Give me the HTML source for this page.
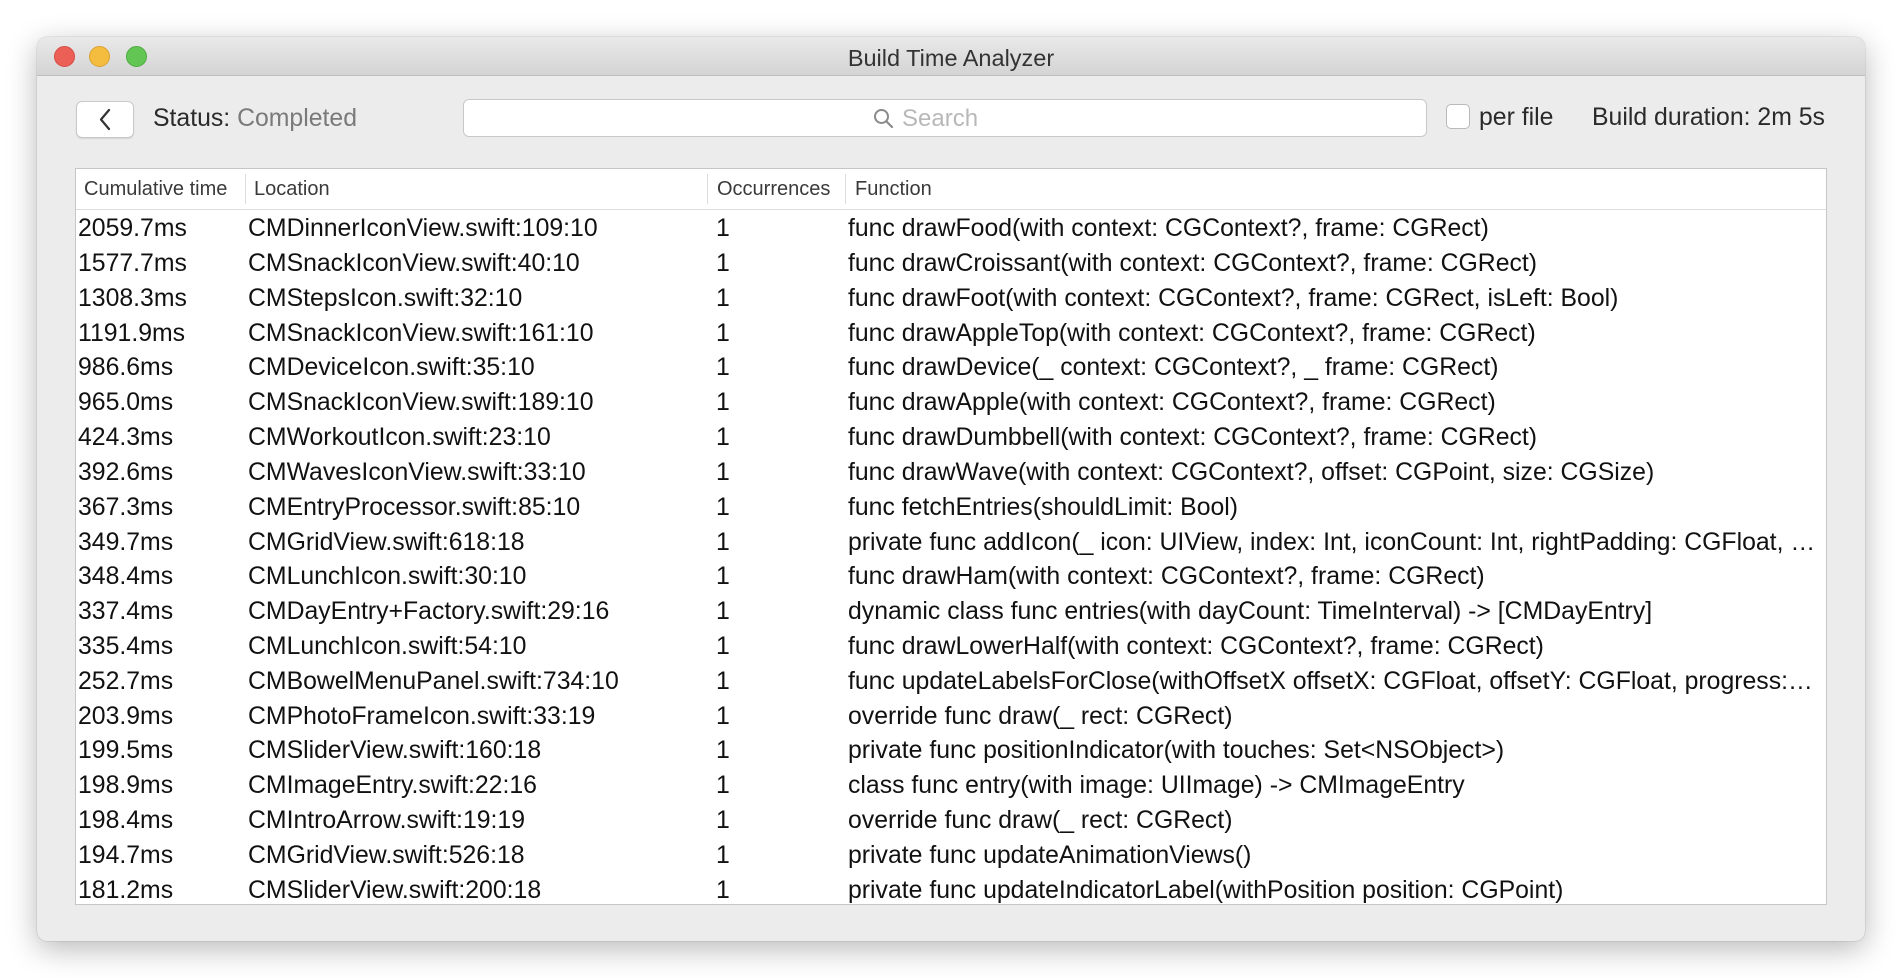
<!DOCTYPE html>
<html><head><meta charset="utf-8">
<style>
*{margin:0;padding:0;box-sizing:border-box}
body{width:1902px;height:978px;background:#fff;font-family:"Liberation Sans",Arial,sans-serif;position:relative;overflow:hidden}
.win{position:absolute;left:37px;top:37px;width:1828px;height:904px;background:#ececec;border-radius:10px;box-shadow:0 8px 30px rgba(0,0,0,.28),0 0 1px rgba(0,0,0,.4);overflow:hidden}
.tb{position:absolute;left:0;top:0;right:0;height:39px;background:linear-gradient(#e9e9e9,#d4d4d4);border-bottom:1px solid #bdbdbd}
.tl{position:absolute;top:9px;width:21px;height:21px;border-radius:50%}
.title{position:absolute;left:0;right:0;top:8px;text-align:center;font-size:23.5px;color:#333}
.abs{position:absolute}
.back{left:39px;top:64px;width:58px;height:37px;background:#fff;border:1px solid #c9c9c9;border-radius:6px;box-shadow:0 1px 1px rgba(0,0,0,.1)}
.search{left:426px;top:62px;width:964px;height:38px;background:#fff;border:1px solid #c8c8c8;border-radius:6px}
.tbl{left:38px;top:131px;width:1752px;height:737px;background:#fff;border:1px solid #c6c6c6}
.hdr{position:absolute;left:0;top:0;right:0;height:41px;border-bottom:1px solid #dcdcdc;font-size:20px;color:#3a3a3a}
.hdr span{position:absolute;top:9px}
.div{position:absolute;top:5px;width:1px;height:30px;background:#dcdcdc}
.row{position:absolute;left:0;right:0;height:35px;font-size:24.8px;color:#111;white-space:nowrap}
.row span{position:absolute;top:5px}
.row .f{right:8px;overflow:hidden;text-overflow:ellipsis}
</style></head><body>
<div class="win">
 <div class="tb">
  <div class="tl" style="left:17px;background:#ec5f57;border:1px solid #d54c44"></div>
  <div class="tl" style="left:52px;background:#f4bd3f;border:1px solid #d9a22f"></div>
  <div class="tl" style="left:89px;background:#62c554;border:1px solid #4eab40"></div>
  <div class="title">Build Time Analyzer</div>
 </div>
 <div class="abs back"><svg width="58" height="37" style="position:absolute;left:-1px;top:-1px"><path d="M33 9 L25 18.5 L33 28" fill="none" stroke="#333" stroke-width="2.2" stroke-linecap="round" stroke-linejoin="round"/></svg></div>
 <div class="abs" style="left:116px;top:68px;font-size:24.8px;color:#2a2a2a">Status: <span style="color:#7a7a7a">Completed</span></div>
 <div class="abs search">
  <svg width="24" height="24" style="position:absolute;left:408px;top:7px"><circle cx="9.5" cy="9.5" r="6.5" fill="none" stroke="#8a8a8a" stroke-width="2"/><path d="M14.5 14.5 L20 20" stroke="#8a8a8a" stroke-width="2.2" stroke-linecap="round"/></svg>
  <span style="position:absolute;left:438px;top:5px;font-size:24px;color:#b8b8b8">Search</span>
 </div>
 <div class="abs" style="left:1409px;top:67px;width:24px;height:25px;background:#fff;border:1px solid #b9b9b9;border-radius:5px"></div>
 <div class="abs" style="left:1442px;top:67px;font-size:24.8px;color:#2a2a2a">per file</div>
 <div class="abs" style="left:1555px;top:67px;font-size:24.8px;color:#2a2a2a">Build duration: 2m 5s</div>
 <div class="abs tbl">
  <div class="hdr">
   <span style="left:8px">Cumulative time</span><div class="div" style="left:169px"></div>
   <span style="left:178px">Location</span><div class="div" style="left:631px"></div>
   <span style="left:641px">Occurrences</span><div class="div" style="left:769px"></div>
   <span style="left:779px">Function</span>
  </div>
 </div>
</div>
<div style="position:absolute;left:75px;top:168px;width:1752px;height:737px;pointer-events:none">
<div class="row" style="top:42px"><span style="left:3px">2059.7ms</span><span style="left:173px">CMDinnerIconView.swift:109:10</span><span style="left:641px">1</span><span class="f" style="left:773px">func drawFood(with context: CGContext?, frame: CGRect)</span></div>
<div class="row" style="top:77px"><span style="left:3px">1577.7ms</span><span style="left:173px">CMSnackIconView.swift:40:10</span><span style="left:641px">1</span><span class="f" style="left:773px">func drawCroissant(with context: CGContext?, frame: CGRect)</span></div>
<div class="row" style="top:112px"><span style="left:3px">1308.3ms</span><span style="left:173px">CMStepsIcon.swift:32:10</span><span style="left:641px">1</span><span class="f" style="left:773px">func drawFoot(with context: CGContext?, frame: CGRect, isLeft: Bool)</span></div>
<div class="row" style="top:147px"><span style="left:3px">1191.9ms</span><span style="left:173px">CMSnackIconView.swift:161:10</span><span style="left:641px">1</span><span class="f" style="left:773px">func drawAppleTop(with context: CGContext?, frame: CGRect)</span></div>
<div class="row" style="top:181px"><span style="left:3px">986.6ms</span><span style="left:173px">CMDeviceIcon.swift:35:10</span><span style="left:641px">1</span><span class="f" style="left:773px">func drawDevice(_ context: CGContext?, _ frame: CGRect)</span></div>
<div class="row" style="top:216px"><span style="left:3px">965.0ms</span><span style="left:173px">CMSnackIconView.swift:189:10</span><span style="left:641px">1</span><span class="f" style="left:773px">func drawApple(with context: CGContext?, frame: CGRect)</span></div>
<div class="row" style="top:251px"><span style="left:3px">424.3ms</span><span style="left:173px">CMWorkoutIcon.swift:23:10</span><span style="left:641px">1</span><span class="f" style="left:773px">func drawDumbbell(with context: CGContext?, frame: CGRect)</span></div>
<div class="row" style="top:286px"><span style="left:3px">392.6ms</span><span style="left:173px">CMWavesIconView.swift:33:10</span><span style="left:641px">1</span><span class="f" style="left:773px">func drawWave(with context: CGContext?, offset: CGPoint, size: CGSize)</span></div>
<div class="row" style="top:321px"><span style="left:3px">367.3ms</span><span style="left:173px">CMEntryProcessor.swift:85:10</span><span style="left:641px">1</span><span class="f" style="left:773px">func fetchEntries(shouldLimit: Bool)</span></div>
<div class="row" style="top:356px"><span style="left:3px">349.7ms</span><span style="left:173px">CMGridView.swift:618:18</span><span style="left:641px">1</span><span class="f" style="left:773px">private func addIcon(_ icon: UIView, index: Int, iconCount: Int, rightPadding: CGFloat, rightMargin: CGFloat)</span></div>
<div class="row" style="top:390px"><span style="left:3px">348.4ms</span><span style="left:173px">CMLunchIcon.swift:30:10</span><span style="left:641px">1</span><span class="f" style="left:773px">func drawHam(with context: CGContext?, frame: CGRect)</span></div>
<div class="row" style="top:425px"><span style="left:3px">337.4ms</span><span style="left:173px">CMDayEntry+Factory.swift:29:16</span><span style="left:641px">1</span><span class="f" style="left:773px">dynamic class func entries(with dayCount: TimeInterval) -&gt; [CMDayEntry]</span></div>
<div class="row" style="top:460px"><span style="left:3px">335.4ms</span><span style="left:173px">CMLunchIcon.swift:54:10</span><span style="left:641px">1</span><span class="f" style="left:773px">func drawLowerHalf(with context: CGContext?, frame: CGRect)</span></div>
<div class="row" style="top:495px"><span style="left:3px">252.7ms</span><span style="left:173px">CMBowelMenuPanel.swift:734:10</span><span style="left:641px">1</span><span class="f" style="left:773px">func updateLabelsForClose(withOffsetX offsetX: CGFloat, offsetY: CGFloat, progress: CGFloat)</span></div>
<div class="row" style="top:530px"><span style="left:3px">203.9ms</span><span style="left:173px">CMPhotoFrameIcon.swift:33:19</span><span style="left:641px">1</span><span class="f" style="left:773px">override func draw(_ rect: CGRect)</span></div>
<div class="row" style="top:564px"><span style="left:3px">199.5ms</span><span style="left:173px">CMSliderView.swift:160:18</span><span style="left:641px">1</span><span class="f" style="left:773px">private func positionIndicator(with touches: Set&lt;NSObject&gt;)</span></div>
<div class="row" style="top:599px"><span style="left:3px">198.9ms</span><span style="left:173px">CMImageEntry.swift:22:16</span><span style="left:641px">1</span><span class="f" style="left:773px">class func entry(with image: UIImage) -&gt; CMImageEntry</span></div>
<div class="row" style="top:634px"><span style="left:3px">198.4ms</span><span style="left:173px">CMIntroArrow.swift:19:19</span><span style="left:641px">1</span><span class="f" style="left:773px">override func draw(_ rect: CGRect)</span></div>
<div class="row" style="top:669px"><span style="left:3px">194.7ms</span><span style="left:173px">CMGridView.swift:526:18</span><span style="left:641px">1</span><span class="f" style="left:773px">private func updateAnimationViews()</span></div>
<div class="row" style="top:704px"><span style="left:3px">181.2ms</span><span style="left:173px">CMSliderView.swift:200:18</span><span style="left:641px">1</span><span class="f" style="left:773px">private func updateIndicatorLabel(withPosition position: CGPoint)</span></div>
</div>
</body></html>
